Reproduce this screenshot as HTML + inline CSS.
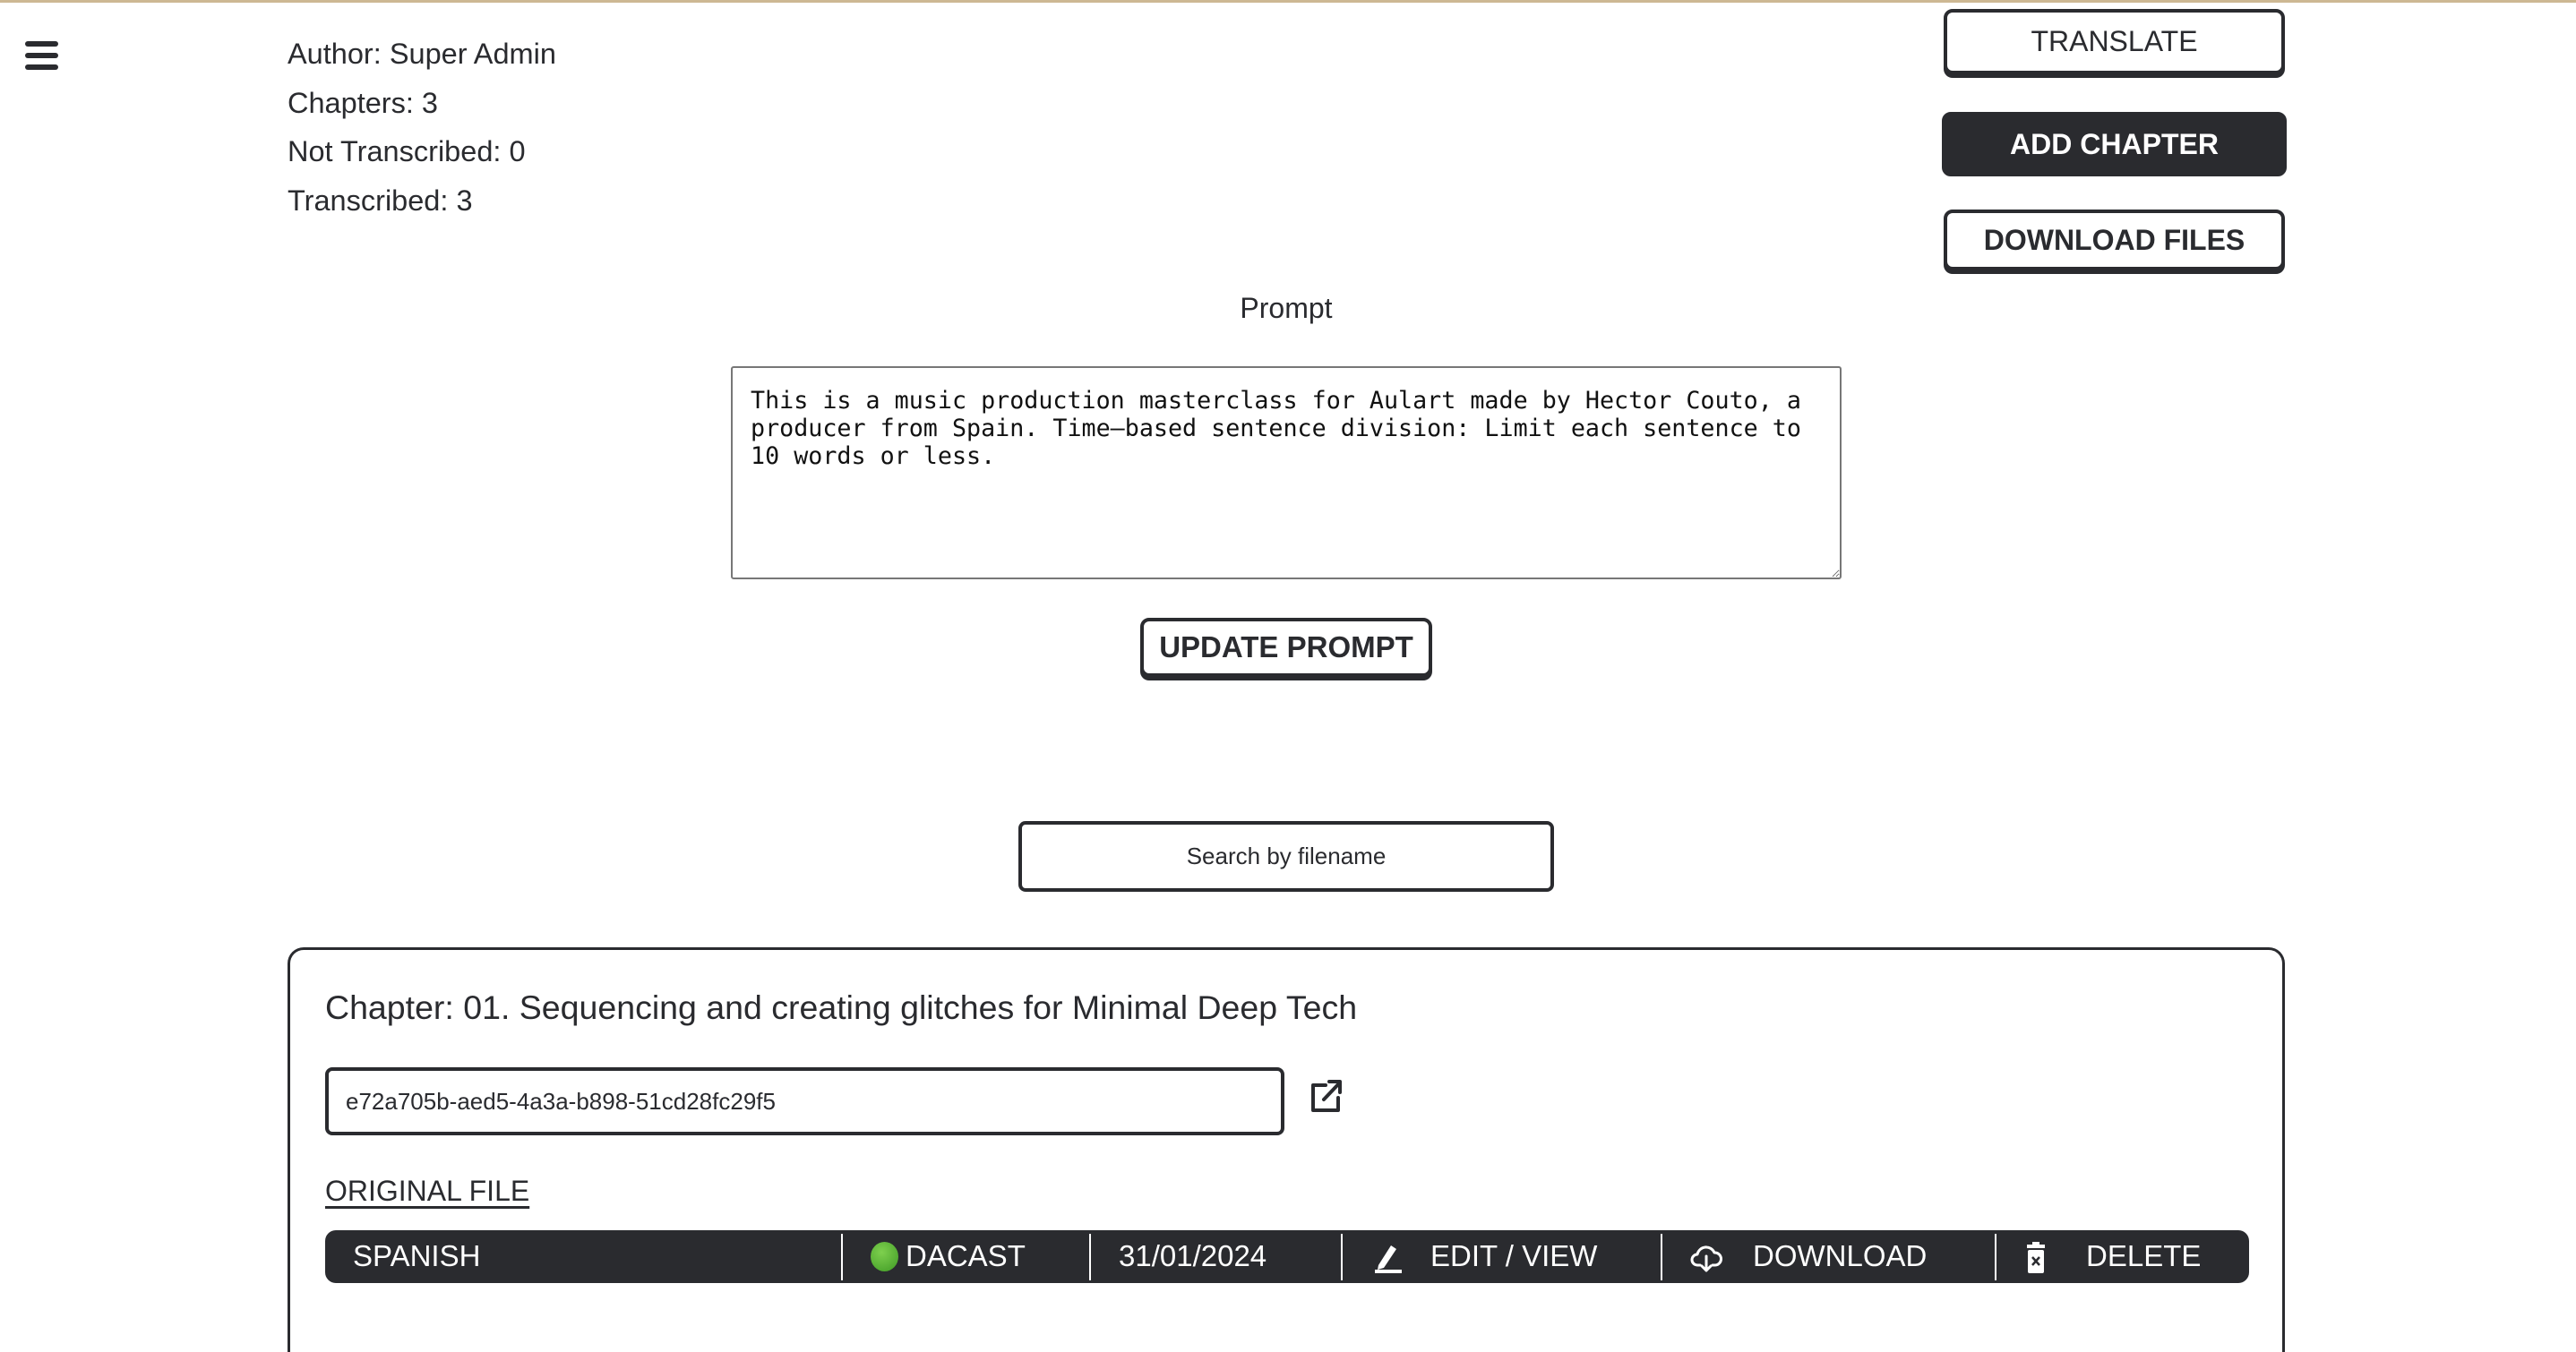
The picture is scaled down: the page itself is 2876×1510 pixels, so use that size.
<!DOCTYPE html>
<html><head><meta charset="utf-8"><style>
*{box-sizing:border-box;margin:0;padding:0}
html{width:2876px;height:1510px;overflow:hidden}
body{width:2876px;height:1510px;background:#fff;position:relative;overflow:hidden;font-family:"Liberation Sans",sans-serif;color:#2a2b2f}
.a{position:absolute}
.topline{left:0;top:0;width:2876px;height:3px;background:#cdb893}
.ham{left:28px;width:37px;height:6px;border-radius:3px;background:#2a2b2f}
.info{left:321px;font-size:32.5px;line-height:55px}
.btn{border:4px solid #2a2b2f;border-radius:10px;box-shadow:0 4px 0 #2a2b2f;background:#fff;display:flex;align-items:center;justify-content:center;font-size:32px}
.b{font-weight:bold}
.dark{background:#2a2b2f;color:#fff;box-shadow:none}
textarea{position:absolute;left:816px;top:409px;width:1240px;height:238px;border:2px solid #777;border-radius:3px;padding:21px 20px;font-family:"DejaVu Sans Mono","Liberation Mono",monospace;font-size:26.7px;line-height:31px;color:#111;resize:both;overflow:hidden}
.card{left:321px;top:1058px;width:2230px;height:452px;border:3.5px solid #2a2b2f;border-bottom:none;border-radius:18px 18px 0 0}
.bar{left:363px;top:1374px;width:2148px;height:59px;background:#2a2b2f;border-radius:12px;color:#fff;font-size:33px}
.bar span{position:absolute;top:10px}
.div{position:absolute;top:4px;width:2px;height:52px;background:#fff}
</style></head><body>
<div class="a topline"></div>
<div class="a ham" style="top:46px"></div>
<div class="a ham" style="top:59px"></div>
<div class="a ham" style="top:72px"></div>
<div class="a info" style="top:33px">Author: Super Admin</div>
<div class="a info" style="top:88px">Chapters: 3</div>
<div class="a info" style="top:142px">Not Transcribed: 0</div>
<div class="a info" style="top:197px">Transcribed: 3</div>

<div class="a btn" style="left:2170px;top:10px;width:381px;height:73px">TRANSLATE</div>
<div class="a btn b dark" style="left:2168px;top:125px;width:385px;height:72px">ADD CHAPTER</div>
<div class="a btn b" style="left:2170px;top:234px;width:381px;height:68px">DOWNLOAD FILES</div>

<div class="a" style="left:0;width:2872px;text-align:center;top:326px;font-size:32px">Prompt</div>
<textarea>This is a music production masterclass for Aulart made by Hector Couto, a producer from Spain. Time–based sentence division: Limit each sentence to 10 words or less.</textarea>
<div class="a btn b" style="left:1273px;top:690px;width:326px;height:66px;font-size:33px">UPDATE PROMPT</div>

<div class="a" style="left:1137px;top:917px;width:598px;height:79px;border:4px solid #2a2b2f;border-radius:8px;display:flex;align-items:center;justify-content:center;font-size:26px">Search by filename</div>

<div class="a card"></div>
<div class="a" style="left:363px;top:1104px;font-size:37.5px">Chapter: 01. Sequencing and creating glitches for Minimal Deep Tech</div>
<div class="a" style="left:363px;top:1192px;width:1071px;height:76px;border:4px solid #2a2b2f;border-radius:8px;padding-left:19px;display:flex;align-items:center;font-size:26px">e72a705b-aed5-4a3a-b898-51cd28fc29f5</div>
<svg class="a" style="left:1460px;top:1204px" width="40" height="40" viewBox="0 0 40 40" fill="none" stroke="#2a2b2f" stroke-width="4" stroke-linecap="round" stroke-linejoin="round"><path d="M20 8H6v28h28V22"/><path d="M18 24L36 5"/><path d="M24 4h12v12"/></svg>
<div class="a" style="left:363px;top:1312px;font-size:32px;text-decoration:underline;text-underline-offset:6px;text-decoration-thickness:3px">ORIGINAL FILE</div>

<div class="a bar">
<span style="left:31px">SPANISH</span>
<div class="div" style="left:576px"></div>
<span style="left:609px;top:13px;width:31px;height:33px;border-radius:50%;background:radial-gradient(circle at 40% 35%,#7ed04e,#3f9a25)"></span>
<span style="left:648px">DACAST</span>
<div class="div" style="left:853px"></div>
<span style="left:886px">31/01/2024</span>
<div class="div" style="left:1134px"></div>
<svg style="position:absolute;left:1170px;top:13px" width="34" height="36" viewBox="0 0 34 36"><path d="M6 26L20 4l6 4L12 29l-7 2z" fill="#fff"/><rect x="2" y="31" width="30" height="4" fill="#fff"/></svg>
<span style="left:1234px">EDIT / VIEW</span>
<div class="div" style="left:1491px"></div>
<svg style="position:absolute;left:1524px;top:13px" width="36" height="36" viewBox="0 0 36 36" fill="none" stroke="#fff" stroke-width="3" stroke-linecap="round" stroke-linejoin="round"><path d="M11 26H8a6 6 0 0 1 0-12 10 10 0 0 1 19-2 7 7 0 0 1 1 14h-3"/><path d="M18 16v16M13 27l5 5 5-5"/></svg>
<span style="left:1594px">DOWNLOAD</span>
<div class="div" style="left:1864px"></div>
<svg style="position:absolute;left:1898px;top:13px" width="24" height="36" viewBox="0 0 24 36"><rect x="2" y="3" width="20" height="4" fill="#fff"/><rect x="8" y="0" width="8" height="4" fill="#fff"/><rect x="3" y="9" width="18" height="26" rx="2" fill="#fff"/><path d="M8 17l8 9M16 17l-8 9" stroke="#2a2b2f" stroke-width="2.5"/></svg>
<span style="left:1966px">DELETE</span>
</div>
</body></html>
